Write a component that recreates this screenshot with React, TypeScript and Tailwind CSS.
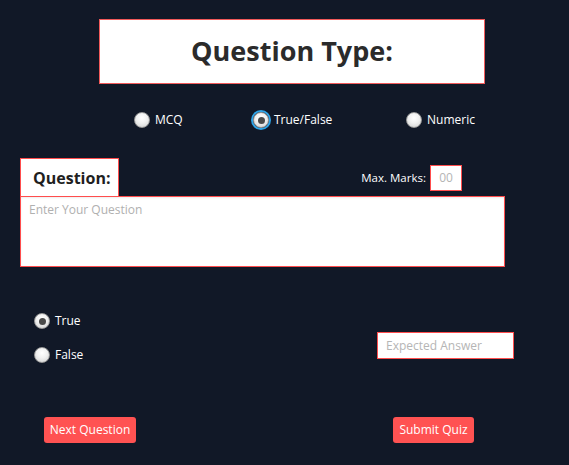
import React from "react";

function Radio({ checked, focused }: { checked?: boolean; focused?: boolean }) {
  return (
    <span
      className={
        "flex h-4 w-4 shrink-0 items-center justify-center rounded-full border border-[#9a9a9a] bg-[radial-gradient(circle_at_50%_35%,#ffffff_0%,#f0f0f0_45%,#cfcfcf_100%)] " +
        (focused ? "ring-2 ring-[#2fa4e7]" : "")
      }
    >
      {checked && <span className="h-[7px] w-[7px] rounded-full bg-[#4a4a4a]" />}
    </span>
  );
}

function Option({ label, checked, focused, width }: { label: string; checked?: boolean; focused?: boolean; width: string }) {
  return (
    <label className={"flex h-4 items-center gap-[5px] " + width}>
      <Radio checked={checked} focused={focused} />
      <span className="text-[12px] leading-4 text-white">{label}</span>
    </label>
  );
}

export default function App() {
  return (
    <div className="h-[465px] w-full overflow-hidden bg-[#111827] font-['Open_Sans',sans-serif]">
      <div className="pt-[19px]">
        <div className="ml-[99px] flex h-[65px] w-[386px] items-center justify-center border border-[#f25a5a] bg-white">
          <h1 className="text-[27px] font-bold text-[#2b2b2b]">Question Type:</h1>
        </div>
      </div>

      <div className="mt-[28px] flex pl-[134px]">
        <Option label="MCQ" width="w-[119px]" />
        <Option label="True/False" checked focused width="w-[153px]" />
        <Option label="Numeric" width="w-[100px]" />
      </div>

      <div className="mt-[30px] w-[505px] pl-[20px]">
        <div className="flex items-end justify-between pr-[43px]">
          <div className="flex h-[38px] w-[99px] items-center border border-b-0 border-[#ff4d4d] bg-white pl-[12px]">
            <span className="text-[16px] font-bold text-[#1f1f1f]">Question:</span>
          </div>
          <div className="mb-[5px] flex items-center gap-[4px]">
            <span className="text-[11.5px] text-white">Max. Marks:</span>
            <div className="flex h-[26px] w-[32px] items-center justify-center border border-[#ff4d4d] bg-white text-[12px] text-[#b5b5b5]">
              00
            </div>
          </div>
        </div>
        <div className="h-[71px] w-[485px] border border-[#ff4d4d] bg-white px-[8px] pt-[4px] text-[12px] text-[#b0b0b0] shadow-[inset_0_1px_2px_rgba(0,0,0,0.08)]">
          Enter Your Question
        </div>
      </div>

      <div className="mt-[46px] flex pl-[34px]">
        <div className="flex w-[343px] flex-col gap-[18px]">
          <Option label="True" checked width="w-auto" />
          <Option label="False" width="w-auto" />
        </div>
        <div className="mt-[19px] flex h-[27px] w-[137px] items-center border border-solid border-[#ff4d4d] bg-white pl-[8px] text-[12px] text-[#b5b5b5]">
          Expected Answer
        </div>
      </div>

      <div className="mt-[54px] flex pl-[44px]">
        <button className="h-[26px] w-[92px] rounded-[3px] bg-[#ff5252] text-[12px] text-white">Next Question</button>
        <button className="ml-[257px] h-[26px] w-[81px] rounded-[3px] bg-[#ff5252] text-[12px] text-white">Submit Quiz</button>
      </div>
    </div>
  );
}
